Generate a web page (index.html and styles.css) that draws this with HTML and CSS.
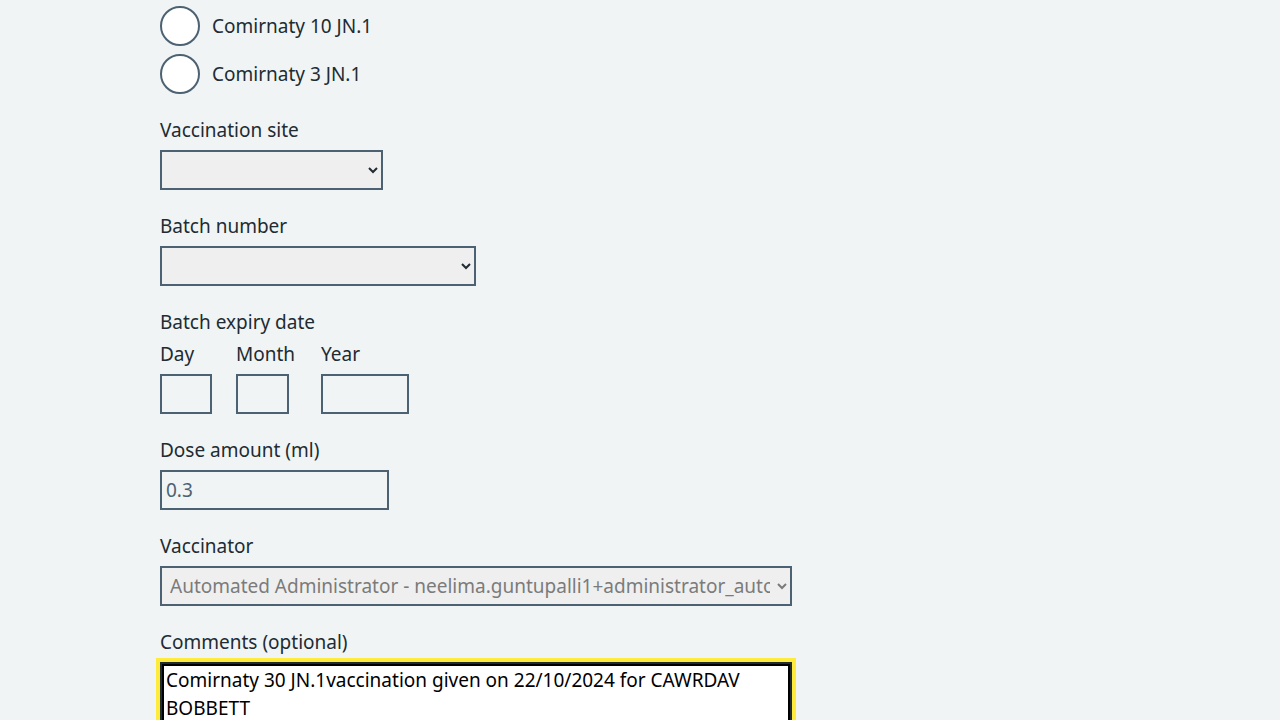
FILE: index.html
```html
<!DOCTYPE html>
<html lang="en">
<head>
<meta charset="utf-8">
<title>Record vaccination</title>
<link rel="stylesheet" href="styles.css">
</head>
<body>
<main class="page">
  <div class="form-group">
    <div class="radios">
      <div class="radio-item">
        <input class="radio-input" type="radio" name="vaccine" id="v10">
        <label class="radio-label" for="v10">Comirnaty 10 JN.1</label>
      </div>
      <div class="radio-item">
        <input class="radio-input" type="radio" name="vaccine" id="v3">
        <label class="radio-label" for="v3">Comirnaty 3 JN.1</label>
      </div>
    </div>
  </div>

  <div class="form-group">
    <label class="label" for="site">Vaccination site</label>
    <select class="select select-site" id="site"><option></option></select>
  </div>

  <div class="form-group">
    <label class="label" for="batch">Batch number</label>
    <select class="select select-batch" id="batch"><option></option></select>
  </div>

  <div class="form-group">
    <fieldset class="fieldset">
      <legend class="label legend">Batch expiry date</legend>
      <div class="date-input">
        <div class="date-item">
          <label class="label" for="day">Day</label>
          <input class="input input-day" id="day" type="text">
        </div>
        <div class="date-item date-item-month">
          <label class="label" for="month">Month</label>
          <input class="input input-month" id="month" type="text">
        </div>
        <div class="date-item">
          <label class="label" for="year">Year</label>
          <input class="input input-year" id="year" type="text">
        </div>
      </div>
    </fieldset>
  </div>

  <div class="form-group">
    <label class="label" for="dose">Dose amount (ml)</label>
    <input class="input input-dose" id="dose" type="text" value="0.3" readonly>
  </div>

  <div class="form-group">
    <label class="label" for="vaccinator">Vaccinator</label>
    <select class="select select-vaccinator" id="vaccinator" disabled>
      <option>Automated Administrator - neelima.guntupalli1+administrator_automation@nhs.net</option>
    </select>
  </div>

  <div class="form-group">
    <label class="label" for="comments">Comments (optional)</label>
    <textarea class="textarea focused" id="comments" rows="5">Comirnaty 30 JN.1vaccination given on 22/10/2024 for CAWRDAV BOBBETT</textarea>
  </div>
</main>
</body>
</html>
```

FILE: styles.css
```css
* { box-sizing: border-box; }

html, body {
  margin: 0;
  background: #f0f4f5;
}

body {
  font-family: "Noto Sans", "Liberation Sans", sans-serif;
  font-size: 19px;
  line-height: 28px;
  color: #212b32;
}

.page {
  padding: 6px 0 0 160px;
}

.form-group {
  margin-bottom: 24px;
}

.label {
  display: block;
  margin-bottom: 8px;
  font-size: 19px;
  line-height: 24px;
  color: #212b32;
}

.radios {
  display: flex;
  flex-direction: column;
  gap: 8px;
}

.radio-item {
  display: flex;
  align-items: center;
  height: 40px;
}

.radio-input {
  appearance: none;
  margin: 0;
  width: 40px;
  height: 40px;
  border: 2px solid #4c6272;
  border-radius: 50%;
  background: #ffffff;
  flex: none;
}

.radio-label {
  padding-left: 12px;
}

.select {
  display: block;
  height: 40px;
  margin: 0;
  padding: 4px 4px 4px 4px;
  border: 2px solid #4c6272;
  border-radius: 0;
  background-color: #efefef;
  font-family: inherit;
  font-size: 19px;
  color: #212b32;
}

.select-site { width: 223px; }
.select-batch { width: 316px; }
.select-vaccinator {
  width: 632px;
  color: #7b7b7b;
  opacity: 1;
}

.fieldset {
  margin: 0;
  padding: 0;
  border: 0;
  min-width: 0;
}

.legend {
  padding: 0;
}

.date-input {
  display: flex;
  align-items: flex-start;
}

.date-item {
  margin-right: 24px;
}

.date-item-month {
  min-width: 61px;
}

.input {
  display: block;
  height: 40px;
  margin: 0;
  padding: 4px;
  border: 2px solid #4c6272;
  border-radius: 0;
  background: #f0f4f5;
  font-family: inherit;
  font-size: 19px;
  color: #4c6272;
}

.input-day { width: 52px; }
.input-month { width: 53px; }
.input-year { width: 88px; }
.input-dose { width: 229px; }

.textarea {
  display: block;
  width: 632px;
  height: 140px;
  margin: 0;
  padding: 2px 4px 4px;
  border: 2px solid #212b32;
  border-radius: 0;
  background: #ffffff;
  font-family: inherit;
  font-size: 19px;
  line-height: 28px;
  color: #000000;
  resize: vertical;
}

.focused {
  outline: 4px solid #ffeb3b;
  outline-offset: 0;
  box-shadow: inset 0 0 0 2px #000000;
}
```
